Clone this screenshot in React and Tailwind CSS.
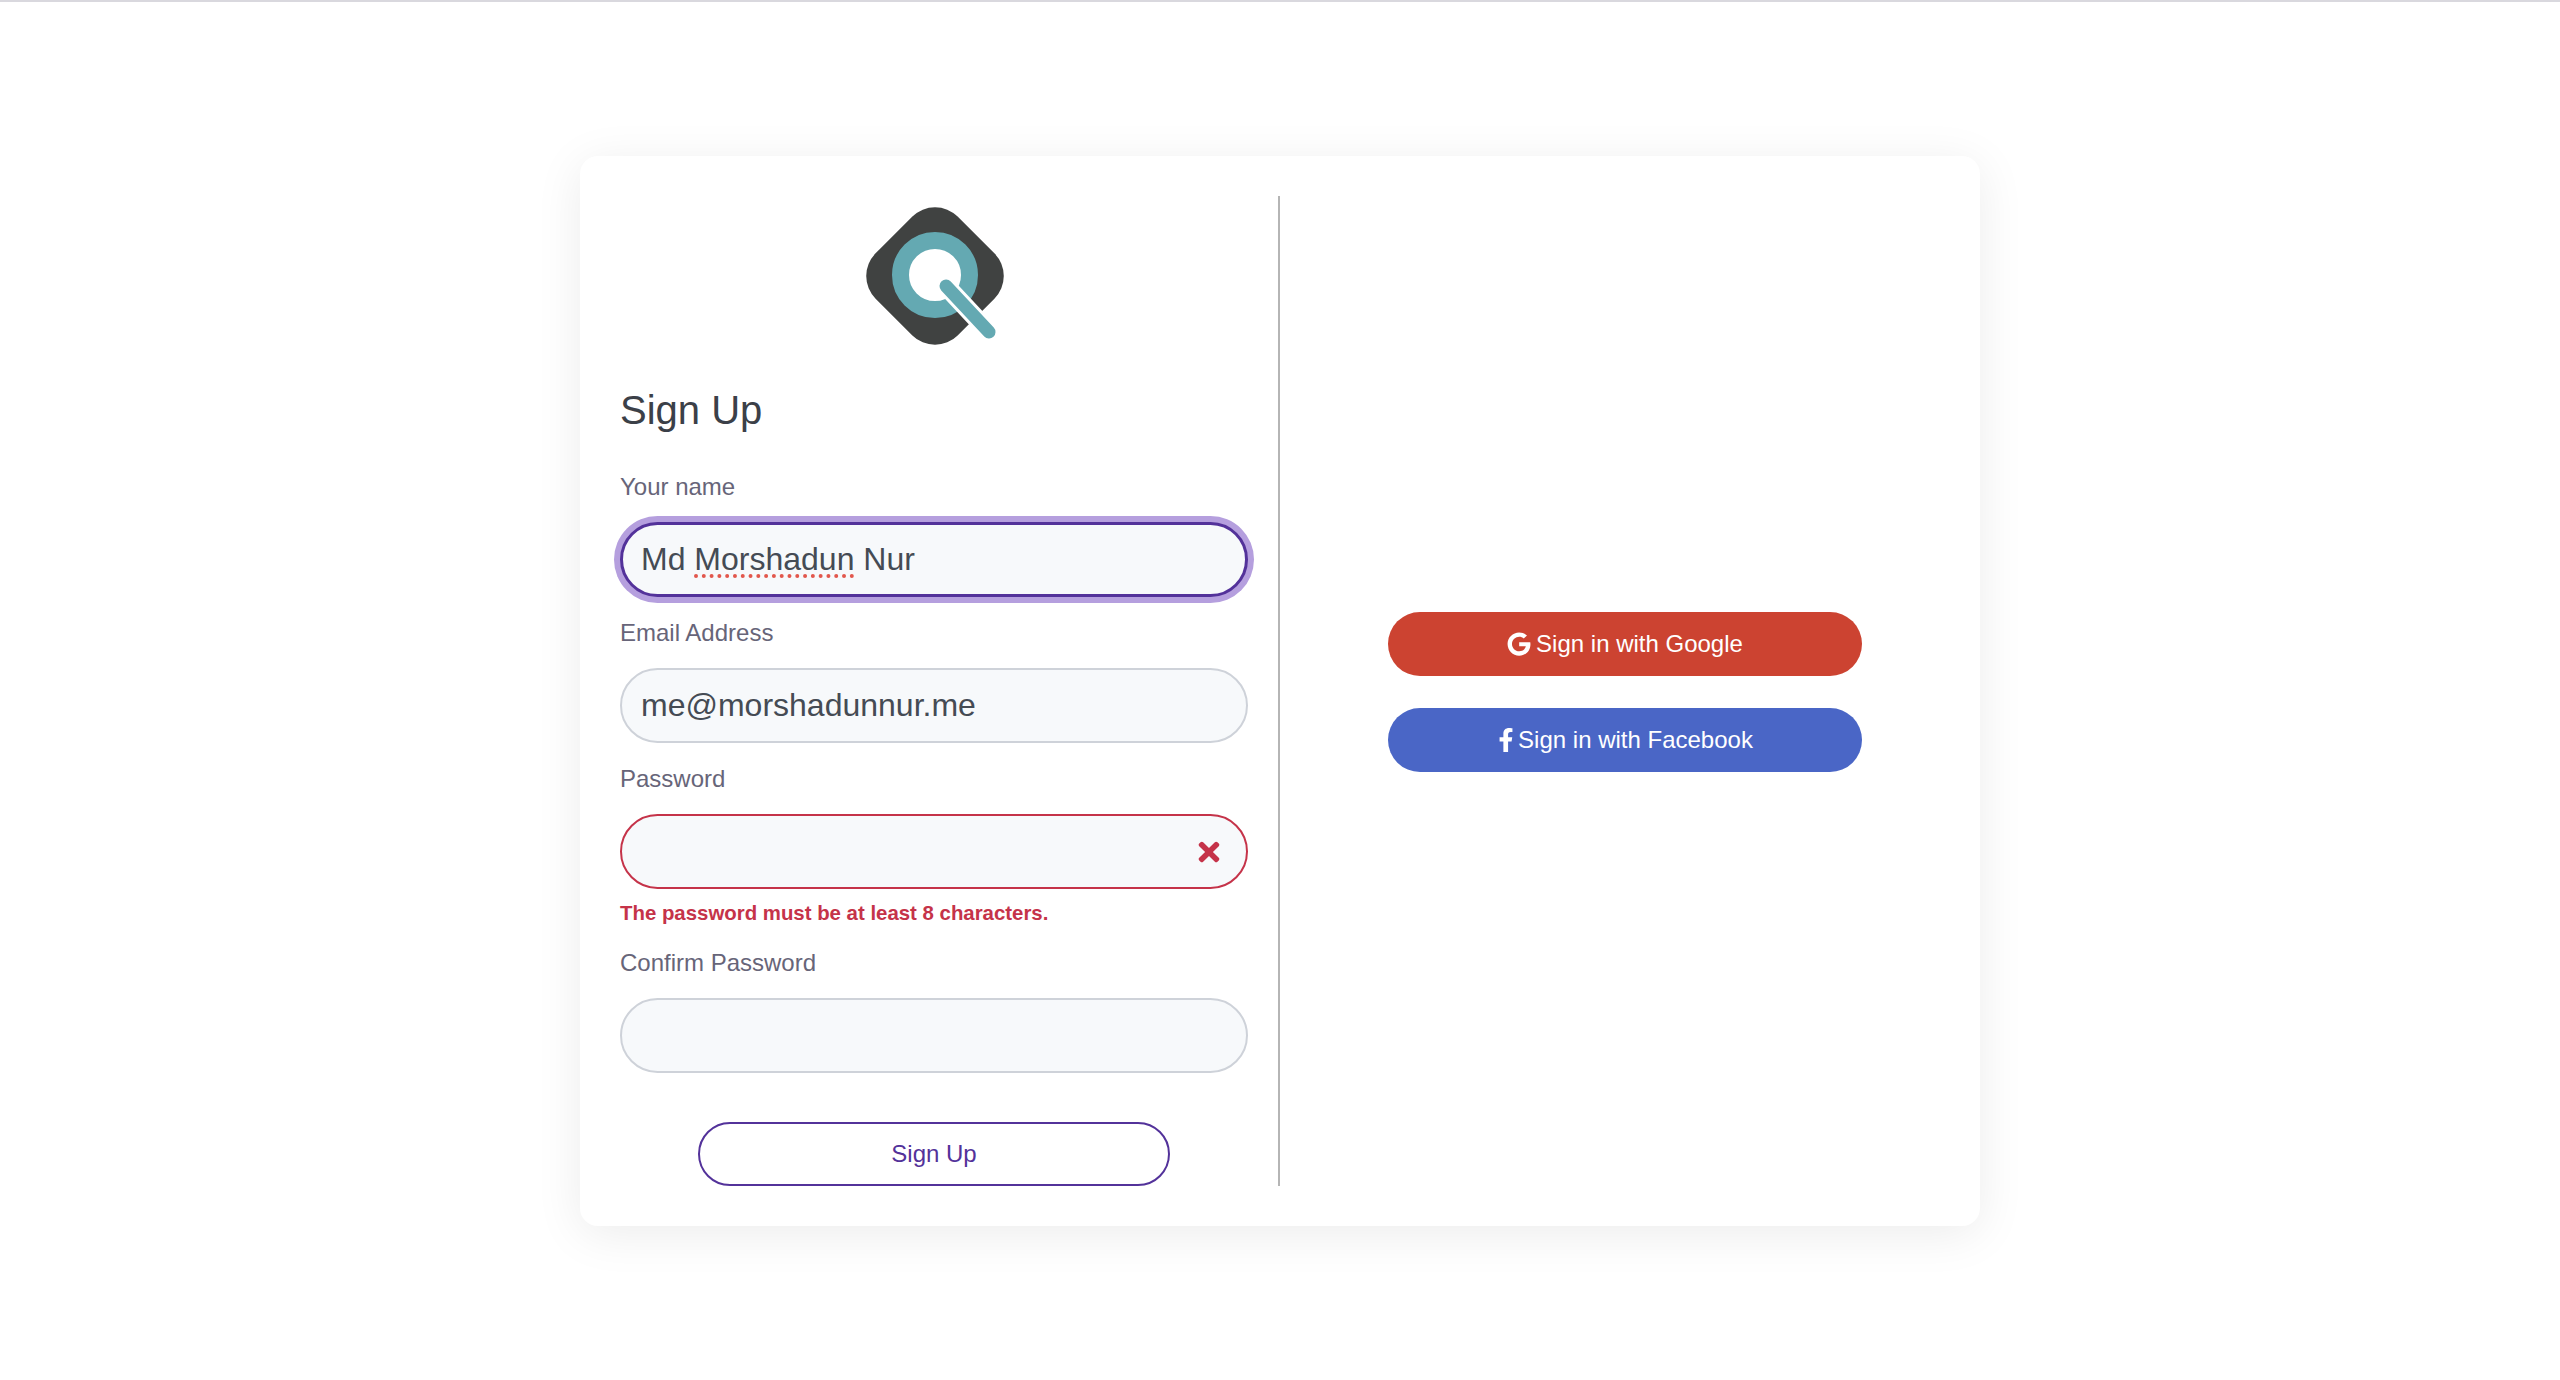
import { FaFacebookF, FaGoogle, FaTimes } from 'react-icons/fa';

const inputClass = 'block h-[75px] w-full rounded-full border-2 bg-[#f7f9fb] px-[19px] text-[32px] text-[#454b54] outline-none';

function Logo() {
    return (
        <svg width="140" height="144" viewBox="0 0 140 144" className="mx-auto mt-[8px] block">
            <rect x="13" y="14" width="116" height="116" rx="32" transform="rotate(45 71 72)" fill="#404241" />
            <circle cx="71" cy="71" r="34.5" fill="#fff" stroke="#64a9b2" strokeWidth="17" />
            <line x1="82" y1="82" x2="125" y2="128" stroke="#fff" strokeWidth="19" strokeLinecap="round" />
            <line x1="82" y1="82" x2="125" y2="128" stroke="#64a9b2" strokeWidth="13" strokeLinecap="round" />
        </svg>
    );
}

function Label({ children }) {
    return <label className="block h-[36px] text-[24px] leading-[36px] text-[#676579]">{children}</label>;
}

export default function App() {
    return (
        <div className="h-[1380px] bg-white font-['Liberation_Sans',Arial,sans-serif]">
            <div className="h-[2px] bg-[#d9d8de]" />
            <div className="mx-auto mt-[154px] flex h-[1070px] w-[1400px] rounded-[18px] bg-white p-[40px] shadow-[0_8px_48px_rgba(0,0,0,0.08)]">
                {/* Sign up form */}
                <div className="w-[628px]">
                    <Logo />
                    <h1 className="mt-[38px] text-[40px] leading-[48px] text-[#3b4048]">Sign Up</h1>

                    <div className="mt-[35px]">
                        <Label>Your name</Label>
                        <div className="mt-[17px] flex h-[75px] items-center rounded-full border-[3px] border-[#53329a] bg-[#f7f9fb] px-[18px] pb-[2px] text-[32px] text-[#454b54] shadow-[0_0_0_6px_#b59fde]">
                            Md&nbsp;
                            <span className="underline decoration-[#e2574c] decoration-dotted decoration-4 underline-offset-[5px]">Morshadun</span>
                            &nbsp;Nur
                        </div>
                    </div>

                    <div className="mt-[18px]">
                        <Label>Email Address</Label>
                        <input className={`${inputClass} mt-[17px] border-[#ced2d9]`} type="email" value="me@morshadunnur.me" readOnly />
                    </div>

                    <div className="mt-[18px]">
                        <Label>Password</Label>
                        <div className="relative mt-[17px]">
                            <input className={`${inputClass} border-[#c53349]`} type="password" readOnly />
                            <FaTimes className="absolute right-[24px] top-[23px] text-[30px] text-[#c53349]" />
                        </div>
                        <p className="mt-[10px] h-[28px] text-[20.4px] font-bold leading-[28px] text-[#c53349]">
                            The password must be at least 8 characters.
                        </p>
                    </div>

                    <div className="mt-[18px]">
                        <Label>Confirm Password</Label>
                        <input className={`${inputClass} mt-[17px] border-[#ced2d9]`} type="password" readOnly />
                    </div>

                    <button className="mx-auto mt-[49px] block h-[64px] w-[472px] rounded-full border-2 border-[#53329a] bg-white text-[24px] text-[#53329a]">
                        Sign Up
                    </button>
                </div>

                <div className="ml-[30px] w-[2px] bg-[#b5b5b5]" />

                {/* Social logins */}
                <div className="mt-[1px] flex flex-1 flex-col justify-center gap-[32px] pl-[108px]">
                    <button className="flex h-[64px] w-[474px] items-center justify-center gap-[5px] rounded-full bg-[#cc4331] text-[24px] text-white">
                        <FaGoogle className="text-[24px]" />
                        Sign in with Google
                    </button>
                    <button className="flex h-[64px] w-[474px] items-center justify-center gap-[3px] rounded-full bg-[#4a66c6] text-[24px] text-white">
                        <FaFacebookF className="w-[18px] text-[24px]" />
                        Sign in with Facebook
                    </button>
                </div>
            </div>
        </div>
    );
}
